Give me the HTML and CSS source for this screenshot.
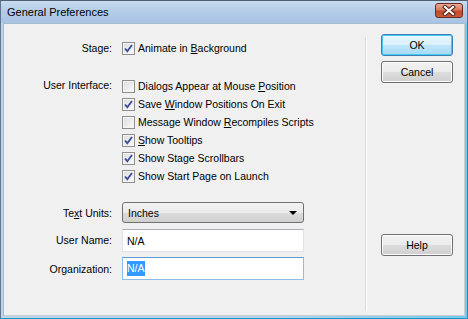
FILE: index.html
```html
<!DOCTYPE html>
<html lang="en">
<head>
    <meta charset="UTF-8">
    <title>General Preferences</title>
    <link rel="stylesheet" href="styles.css">
</head>
<body>
    <div class="window">
        <div class="titlebar">
            <span class="title">General Preferences</span>
            <span class="close">
                <svg width="14" height="11" viewBox="0 0 14 11">
                    <path d="M3 2 L11 9 M11 2 L3 9" stroke="#4a1d15" stroke-width="4" stroke-linecap="square"/>
                    <path d="M3 2 L11 9 M11 2 L3 9" stroke="#ffffff" stroke-width="2.2" stroke-linecap="square"/>
                </svg>
            </span>
        </div>
        <div class="client">
            <div class="prefs">
                <div class="lbl stage-lbl">Stage:</div>
                <div class="checks stage">
                    <div class="check on"><span class="box"></span><span>Animate in <u>B</u>ackground</span></div>
                </div>

                <div class="lbl ui-lbl">User Interface:</div>
                <div class="checks ui">
                    <div class="check"><span class="box"></span><span>Dialogs Appear at Mouse <u>P</u>osition</span></div>
                    <div class="check on"><span class="box"></span><span>Save <u>W</u>indow Positions On Exit</span></div>
                    <div class="check"><span class="box"></span><span>Message Window <u>R</u>ecompiles Scripts</span></div>
                    <div class="check on"><span class="box"></span><span><u>S</u>how Tooltips</span></div>
                    <div class="check on"><span class="box"></span><span>Show Stage Scrollbars</span></div>
                    <div class="check on"><span class="box"></span><span>Show Start Page on Launch</span></div>
                </div>

                <div class="lbl units-lbl">Te<u>x</u>t Units:</div>
                <div class="select units">
                    <span>Inches</span>
                    <span class="arrow"></span>
                </div>

                <div class="lbl field-lbl">User Name:</div>
                <div class="text field">N/A</div>

                <div class="lbl field-lbl">Organization:</div>
                <div class="text field focused"><span class="sel">N/A</span></div>
            </div>
            <div class="sep"></div>
            <div class="buttons">
                <button class="btn default">OK</button>
                <button class="btn">Cancel</button>
                <button class="btn help">Help</button>
            </div>
        </div>
    </div>
</body>
</html>
```

FILE: styles.css
```css
* {
    margin: 0;
    padding: 0;
    box-sizing: border-box;
}

body {
    font-family: "Liberation Sans", Arial, sans-serif;
    font-size: 10.5px;
    color: #000000;
    background: #ffffff;
}

.window {
    width: 468px;
    height: 319px;
    display: flex;
    flex-direction: column;
    border: 1px solid #1a95c2;
    border-top-color: #4d5d73;
    border-left-color: #5f7590;
    padding: 0 2px 2px 2px;
    background: linear-gradient(to right, #c0d5ec, #b4d4ef 60%, #72cbee);
}

.titlebar {
    height: 22px;
    margin: 0 -2px;
    display: flex;
    align-items: center;
    justify-content: space-between;
    padding: 0 4px 0 6px;
    background: linear-gradient(#c9dbef, #b2cbe7 50%, #a9c4e4);
}

.title {
    font-size: 11px;
    color: #000000;
    padding-bottom: 1px;
}

.close {
    width: 28px;
    height: 15px;
    margin-top: -3px;
    display: flex;
    align-items: center;
    justify-content: center;
    border: 1px solid #6e2a1f;
    border-radius: 3px;
    background: linear-gradient(#e9aa98, #d8785f 45%, #c24a2c 55%, #c85a3c);
}

.client {
    flex: 1;
    display: flex;
    border: 1px solid #a7b9cf;
    border-right-color: #c8cdd3;
    border-bottom-color: #c8cdd3;
    background: #f0f0f0;
}

.prefs {
    width: 361px;
    display: grid;
    grid-template-columns: 108px 182px;
    column-gap: 10px;
    align-content: start;
    padding-top: 15px;
}

.lbl {
    text-align: right;
    line-height: 18px;
}

.checks {
    display: flex;
    flex-direction: column;
}

.stage {
    margin-bottom: 20px;
}

.ui-lbl {
    line-height: 16px;
}

.check {
    height: 18px;
    display: flex;
    align-items: center;
    white-space: nowrap;
}

.box {
    flex-shrink: 0;
    width: 13px;
    height: 13px;
    margin-right: 3px;
    border: 1px solid #8e8f8f;
    background: linear-gradient(135deg, #dcdcdc, #fbfbfb);
    box-shadow: inset 0 0 0 1px #f4f4f4;
}

.check.on .box {
    background:
        url("data:image/svg+xml,%3Csvg xmlns='http://www.w3.org/2000/svg' width='11' height='11'%3E%3Cpath d='M2 5.5 L4.3 8.2 L9 2' fill='none' stroke='%233c4f9c' stroke-width='1.9'/%3E%3C/svg%3E") center no-repeat,
        linear-gradient(135deg, #dcdcdc, #fbfbfb);
}

.units-lbl {
    margin-top: 18px;
    line-height: 20px;
}

.select {
    margin-top: 17px;
    height: 21px;
    display: flex;
    align-items: center;
    justify-content: space-between;
    padding: 0 5px 0 5px;
    border: 1px solid #707070;
    border-radius: 3px;
    background: linear-gradient(#f2f2f2, #ebebeb 50%, #dddddd 50%, #cfcfcf);
}

.arrow {
    width: 0;
    height: 0;
    border-left: 4px solid transparent;
    border-right: 4px solid transparent;
    border-top: 4px solid #000000;
    margin-right: 1px;
}

.field-lbl {
    line-height: 22px;
    margin-top: 6px;
}

.text {
    height: 23px;
    margin-top: 6px;
    display: flex;
    align-items: center;
    padding-left: 4px;
    background: #ffffff;
    border: 1px solid #e2e3ea;
    border-top-color: #abadb3;
}

.focused {
    margin-top: 5px;
    border-color: #8fbde9;
    border-top-color: #5d9ad6;
}

.sel {
    background: #3399ff;
    color: #ffffff;
    padding: 1px 0 2px;
}

.sep {
    width: 1px;
    margin: 13px 0 4px;
    background: #dadada;
    box-shadow: 1px 0 0 #ffffff;
}

.buttons {
    flex: 1;
    display: flex;
    flex-direction: column;
    padding: 10px 0 0 15px;
}

.btn {
    width: 72px;
    height: 22px;
    margin-bottom: 5px;
    font-family: inherit;
    font-size: inherit;
    border: 1px solid #707070;
    border-radius: 3px;
    background: linear-gradient(#f2f2f2, #ebebeb 50%, #dddddd 50%, #cfcfcf);
    box-shadow: inset 0 0 0 1px #fcfcfc;
}

.btn.default {
    border-color: #3c7fb1;
    background: linear-gradient(#eaf6fd, #d9f0fc 50%, #bee6fd 50%, #a7d9f5);
    box-shadow: inset 0 0 0 1px #48c8f3;
}

.btn.help {
    margin-top: 146px;
}
```
